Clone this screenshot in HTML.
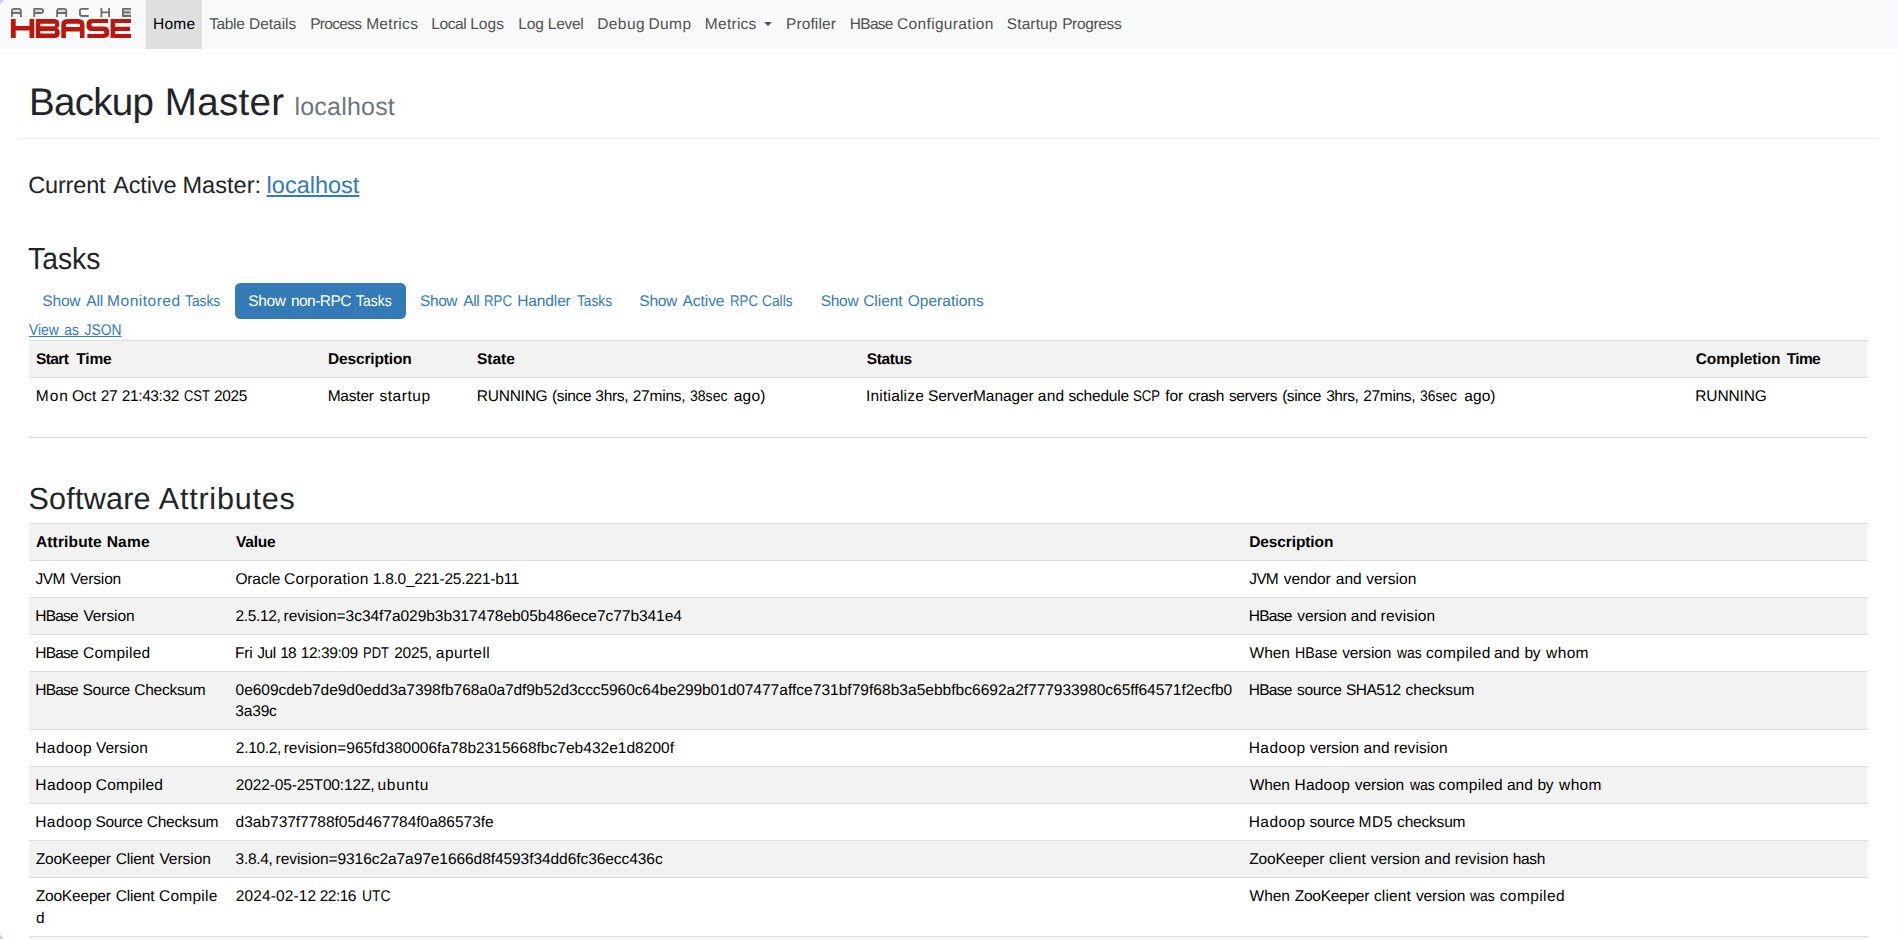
<!DOCTYPE html>
<html lang="en"><head><meta charset="utf-8"><title>Backup Master: localhost</title>
<style>
html,body{margin:0;padding:0}
body{width:1898px;height:939px;overflow:hidden;position:relative;background:#fff;font-family:"Liberation Sans",sans-serif;font-size:15px;color:#212529;text-rendering:geometricPrecision}
.t{position:absolute;white-space:nowrap;display:block}
a{color:#337ab7;text-decoration:none}
nav{position:absolute;left:0;top:0;width:1898px;height:49px;background:#f8f9fa}
nav ul{list-style:none;margin:0;padding:0}
nav li{position:absolute;top:0;height:49px}
nav li.active{background:#dfdfdf}
nav a{color:#505152}
nav li.active a{color:#000}
.caret{position:absolute;top:22px;width:0;height:0;border-left:4.2px solid transparent;border-right:4.2px solid transparent;border-top:4.2px solid #505152}
.corner{position:absolute;left:0;width:6px;height:6px;z-index:5}
.corner.tl{top:0;background:radial-gradient(circle at 6px 6px,rgba(188,210,240,0) 5.5px,#bcd2f0 6.3px)}
.corner.bl{bottom:0;background:radial-gradient(circle at 6px 0,rgba(181,201,232,0) 5.5px,#b5c9e8 6.3px)}
.edge{position:absolute;right:0;top:0;width:1px;height:939px;background:#fcfcfc;z-index:5}
main{position:absolute;left:0;top:0;width:1898px;height:939px;overflow:hidden}
h1,h2,h4{margin:0;font-weight:normal}
h1 small{color:#6c757d}
hr{position:absolute;left:18px;top:138px;width:1861px;height:1px;border:0;margin:0;background:#eeeeee}
.pills{list-style:none;margin:0;padding:0}
.pills li.active{position:absolute;left:235px;top:283px;width:171px;height:36px;border-radius:5.5px;background:#337ab7}
.pills li.active a{color:#fff}
table{margin-left:29px;width:1839px;border-collapse:collapse;table-layout:fixed}
td,th{color:#000;padding:0;border:0;border-top:1px solid #dddddd;font-weight:normal}
th .t, th.t{font-weight:bold}
tr.s>*{background:#f2f2f2}
.b{font-weight:bold}
.u{text-decoration:underline;text-decoration-thickness:1px;text-underline-offset:2px}
</style></head>
<body>
<nav>
<a class="brand" href="#"><svg width="140" height="49" viewBox="0 0 140 49" style="position:absolute;left:0;top:0">
<g fill="#dcdcdc"><rect x="12.8" y="9.7" width="7.2" height="2.4"/><rect x="35.1" y="9.7" width="7.1" height="2.4"/><rect x="58" y="9.7" width="7.3" height="2.4"/><rect x="123.8" y="9.7" width="7.2" height="5.4" fill="#d2d2d2"/></g>
<g fill="none" stroke="#6b6b6b" stroke-width="1.8" stroke-linejoin="round">
<path d="M11.9,16.9V10.8Q11.9,8.8 13.9,8.8H18.9Q20.9,8.8 20.9,10.8V16.9M11.9,13H20.9"/>
<path d="M34.2,16.9V8.8H41Q43.1,8.8 43.1,10.9Q43.1,13 41,13H34.2"/>
<path d="M57.1,16.9V10.8Q57.1,8.8 59.1,8.8H64.2Q66.2,8.8 66.2,10.8V16.9M57.1,13H66.2"/>
<path d="M88.7,8.8H82Q79.9,8.8 79.9,10.8V14Q79.9,16 82,16H88.7"/>
<path d="M101.4,7.9V16.9M109.1,7.9V16.9M101.4,12.4H109.1"/>
<path d="M131,8.8H122.9V16H131M122.9,12.4H130.5"/>
</g>
<g fill="#ba160c" fill-rule="evenodd">
<path d="M10.9,18.9H15.7V26.1H29.5V18.9H34.3V37.9H29.5V30.5H15.7V37.9H10.9Z"/>
<path d="M35.9,18.9H54Q59.2,18.9 59.2,23V25Q59.2,28 57,28.4Q59.6,28.8 59.6,32V34Q59.6,37.9 54.5,37.9H35.9ZM40.4,23.8V26.3H55V23.8ZM40.4,31.1V33.6H55V31.1Z"/>
<path d="M61.3,37.9V25Q61.3,18.9 67.5,18.9H78.3Q84.5,18.9 84.5,25V37.9H80V31.4H65.9V37.9ZM65.9,27H80V25.3Q80,23.8 78.5,23.8H67.4Q65.9,23.8 65.9,25.3Z"/>
<path d="M108.1,18.9H92Q86.6,18.9 86.6,23.5V26Q86.6,31 92,31H103Q104.4,31 104.4,32.4Q104.4,33.9 103,33.9H87.4V37.9H103.7Q109.1,37.9 109.1,33.5V31Q109.1,26.4 103.7,26.4H92.7Q91.4,26.4 91.4,24.7Q91.4,23 92.7,23H108.1Z"/>
<path d="M110.6,18.9H131V23H115V26.8H130V31H115V33.9H131V37.9H110.6Z"/>
</g>
</svg>
</a>
<ul>
<li class="active" style="left:146.0px;width:56.0px"><a href="#"><span id="n0" class="t" style="left:6.93px;top:14px;font-size:15.5px;line-height:21px;letter-spacing:0.298px;color:#000;">Home</span></a></li>
<li style="left:202.1px;width:100.9px"><a href="#"><span id="n1w0" class="t" style="left:7.06px;top:14px;font-size:15.5px;line-height:21px;letter-spacing:-0.354px;color:#505152;">Table</span> <span id="n1w1" class="t" style="left:47.03px;top:14px;font-size:15.5px;line-height:21px;letter-spacing:-0.037px;color:#505152;">Details</span></a></li>
<li style="left:304.0px;width:120.9px"><a href="#"><span id="n2w0" class="t" style="left:6.20px;top:14px;font-size:15.5px;line-height:21px;letter-spacing:-0.679px;color:#505152;">Process</span> <span id="n2w1" class="t" style="left:62.15px;top:14px;font-size:15.5px;line-height:21px;letter-spacing:0.300px;color:#505152;">Metrics</span></a></li>
<li style="left:425.1px;width:86.1px"><a href="#"><span id="n3w0" class="t" style="left:6.22px;top:14px;font-size:15.5px;line-height:21px;letter-spacing:-0.446px;color:#505152;">Local</span> <span id="n3w1" class="t" style="left:45.10px;top:14px;font-size:15.5px;line-height:21px;letter-spacing:0.044px;color:#505152;">Logs</span></a></li>
<li style="left:511.9px;width:78.7px"><a href="#"><span id="n4w0" class="t" style="left:6.30px;top:14px;font-size:15.5px;line-height:21px;letter-spacing:-0.092px;color:#505152;">Log</span> <span id="n4w1" class="t" style="left:35.97px;top:14px;font-size:15.5px;line-height:21px;letter-spacing:-0.298px;color:#505152;">Level</span></a></li>
<li style="left:590.8px;width:107.6px"><a href="#"><span id="n5w0" class="t" style="left:6.39px;top:14px;font-size:15.5px;line-height:21px;letter-spacing:0.436px;color:#505152;">Debug</span> <span id="n5w1" class="t" style="left:57.71px;top:14px;font-size:15.5px;line-height:21px;letter-spacing:0.399px;color:#505152;">Dump</span></a></li>
<li style="left:698.5px;width:81.2px"><a href="#"><span id="n6" class="t" style="left:6.36px;top:14px;font-size:15.5px;line-height:21px;letter-spacing:0.257px;color:#505152;">Metrics</span><i class="caret" style="left:65.5px"></i></a></li>
<li style="left:779.6px;width:63.7px"><a href="#"><span id="n7" class="t" style="left:6.34px;top:14px;font-size:15.5px;line-height:21px;letter-spacing:0.121px;color:#505152;">Profiler</span></a></li>
<li style="left:843.3px;width:156.4px"><a href="#"><span id="n8w0" class="t" style="left:6.57px;top:14px;font-size:15.5px;line-height:21px;letter-spacing:-0.741px;color:#505152;">HBase</span> <span id="n8w1" class="t" style="left:53.76px;top:14px;font-size:15.5px;line-height:21px;letter-spacing:0.335px;color:#505152;">Configuration</span></a></li>
<li style="left:1000.0px;width:128.6px"><a href="#"><span id="n9w0" class="t" style="left:6.76px;top:14px;font-size:15.5px;line-height:21px;letter-spacing:0.119px;color:#505152;">Startup</span> <span id="n9w1" class="t" style="left:62.13px;top:14px;font-size:15.5px;line-height:21px;letter-spacing:-0.340px;color:#505152;">Progress</span></a></li>
</ul>
</nav>
<main>
<h1><span id="h1a1" class="t" style="left:28.99px;top:79px;font-size:38.5px;line-height:47px;letter-spacing:-0.684px;">Backup</span> <span id="h1a2" class="t" style="left:164.84px;top:79px;font-size:38.5px;line-height:47px;letter-spacing:0.293px;">Master</span><small><span id="h1b" class="t" style="left:294.45px;top:91px;font-size:25px;line-height:32px;letter-spacing:0.212px;color:#6c757d;">localhost</span></small></h1>
<hr>
<h4><span id="h4a1" class="t" style="left:28.26px;top:170px;font-size:23.5px;line-height:30px;letter-spacing:-0.166px;">Current</span> <span id="h4a2" class="t" style="left:113.19px;top:170px;font-size:23.5px;line-height:30px;letter-spacing:-0.135px;">Active</span> <span id="h4a3" class="t" style="left:182.47px;top:170px;font-size:23.5px;line-height:30px;letter-spacing:0.053px;">Master:</span> <a href="#"><span id="h4b" class="t u" style="left:266.61px;top:170px;font-size:23.5px;line-height:30px;letter-spacing:0.001px;color:#337ab7;text-decoration-thickness:2px;text-underline-offset:1.5px;">localhost</span></a></h4>
<h2><span id="h2a" class="t" style="left:28.08px;top:240px;font-size:30.5px;line-height:38px;letter-spacing:0.000px;transform:scaleX(0.9289);transform-origin:0 0;">Tasks</span></h2>
<ul class="pills">
<li><a href="#"><span id="p0w0" class="t" style="left:42.34px;top:291px;font-size:15.5px;line-height:21px;letter-spacing:-0.181px;color:#337ab7;">Show</span> <span id="p0w1" class="t" style="left:86.28px;top:291px;font-size:15.5px;line-height:21px;letter-spacing:-0.147px;color:#337ab7;">All</span> <span id="p0w2" class="t" style="left:107.11px;top:291px;font-size:15.5px;line-height:21px;letter-spacing:0.505px;color:#337ab7;">Monitored</span> <span id="p0w3" class="t" style="left:184.81px;top:291px;font-size:15.5px;line-height:21px;letter-spacing:0.000px;color:#337ab7;transform:scaleX(0.8900);transform-origin:0 0;">Tasks</span></a></li>
<li class="active"><a href="#"><span id="p1w0" class="t" style="left:13.23px;top:8px;font-size:15.5px;line-height:21px;letter-spacing:-0.327px;color:#fff;">Show</span> <span id="p1w1" class="t" style="left:55.89px;top:8px;font-size:15.5px;line-height:21px;letter-spacing:-0.513px;color:#fff;">non-RPC</span> <span id="p1w2" class="t" style="left:121.31px;top:8px;font-size:15.5px;line-height:21px;letter-spacing:0.000px;color:#fff;transform:scaleX(0.9022);transform-origin:0 0;">Tasks</span></a></li>
<li><a href="#"><span id="p2w0" class="t" style="left:420.04px;top:291px;font-size:15.5px;line-height:21px;letter-spacing:-0.418px;color:#337ab7;">Show</span> <span id="p2w1" class="t" style="left:463.28px;top:291px;font-size:15.5px;line-height:21px;letter-spacing:-0.439px;color:#337ab7;">All</span> <span id="p2w2" class="t" style="left:484.15px;top:291px;font-size:15.5px;line-height:21px;letter-spacing:0.000px;color:#337ab7;transform:scaleX(0.8593);transform-origin:0 0;">RPC</span> <span id="p2w3" class="t" style="left:517.31px;top:291px;font-size:15.5px;line-height:21px;letter-spacing:-0.132px;color:#337ab7;">Handler</span> <span id="p2w4" class="t" style="left:577.35px;top:291px;font-size:15.5px;line-height:21px;letter-spacing:0.000px;color:#337ab7;transform:scaleX(0.8852);transform-origin:0 0;">Tasks</span></a></li>
<li><a href="#"><span id="p3w0" class="t" style="left:639.36px;top:291px;font-size:15.5px;line-height:21px;letter-spacing:-0.278px;color:#337ab7;">Show</span> <span id="p3w1" class="t" style="left:682.53px;top:291px;font-size:15.5px;line-height:21px;letter-spacing:-0.048px;color:#337ab7;">Active</span> <span id="p3w2" class="t" style="left:729.69px;top:291px;font-size:15.5px;line-height:21px;letter-spacing:0.000px;color:#337ab7;transform:scaleX(0.8539);transform-origin:0 0;">RPC</span> <span id="p3w3" class="t" style="left:761.74px;top:291px;font-size:15.5px;line-height:21px;letter-spacing:0.000px;color:#337ab7;transform:scaleX(0.8880);transform-origin:0 0;">Calls</span></a></li>
<li><a href="#"><span id="p4w0" class="t" style="left:820.84px;top:291px;font-size:15.5px;line-height:21px;letter-spacing:-0.340px;color:#337ab7;">Show</span> <span id="p4w1" class="t" style="left:863.22px;top:291px;font-size:15.5px;line-height:21px;letter-spacing:-0.056px;color:#337ab7;">Client</span> <span id="p4w2" class="t" style="left:907.66px;top:291px;font-size:15.5px;line-height:21px;letter-spacing:0.032px;color:#337ab7;">Operations</span></a></li>
</ul>
<a href="#"><span id="vj" class="t u" style="left:29.03px;top:320px;font-size:15.5px;line-height:21px;letter-spacing:0.000px;color:#337ab7;word-spacing:2px;text-underline-offset:1px;transform:scaleX(0.8928);transform-origin:0 0;">View as JSON</span></a>
<table style="margin-top:340px"><thead><tr class="s" style="height:37px">
<th><span id="t1h0w0" class="t b" style="left:35.88px;top:349px;font-size:15.5px;line-height:21px;letter-spacing:-0.551px;">Start</span> <span id="t1h0w1" class="t b" style="left:76.32px;top:349px;font-size:15.5px;line-height:21px;letter-spacing:-0.201px;">Time</span></th>
<th><span id="t1h1" class="t b" style="left:327.95px;top:349px;font-size:15.5px;line-height:21px;letter-spacing:-0.136px;">Description</span></th>
<th><span id="t1h2" class="t b" style="left:477.04px;top:349px;font-size:15.5px;line-height:21px;letter-spacing:-0.042px;">State</span></th>
<th><span id="t1h3" class="t b" style="left:866.68px;top:349px;font-size:15.5px;line-height:21px;letter-spacing:-0.364px;">Status</span></th>
<th><span id="t1h4w0" class="t b" style="left:1695.70px;top:349px;font-size:15.5px;line-height:21px;letter-spacing:-0.053px;">Completion</span> <span id="t1h4w1" class="t b" style="left:1786.81px;top:349px;font-size:15.5px;line-height:21px;letter-spacing:-0.669px;">Time</span></th>
</tr></thead><tbody><tr style="height:60px">
<td><span id="t1r0w0" class="t" style="left:35.76px;top:386px;font-size:15.5px;line-height:21px;letter-spacing:1.002px;">Mon</span> <span id="t1r0w1" class="t" style="left:72.03px;top:386px;font-size:15.5px;line-height:21px;letter-spacing:0.031px;">Oct</span> <span id="t1r0w2" class="t" style="left:100.87px;top:386px;font-size:15.5px;line-height:21px;letter-spacing:-0.377px;">27</span> <span id="t1r0w3" class="t" style="left:121.87px;top:386px;font-size:15.5px;line-height:21px;letter-spacing:-0.419px;">21:43:32</span> <span id="t1r0w4" class="t" style="left:183.60px;top:386px;font-size:15.5px;line-height:21px;letter-spacing:0.000px;transform:scaleX(0.8364);transform-origin:0 0;">CST</span> <span id="t1r0w5" class="t" style="left:214.01px;top:386px;font-size:15.5px;line-height:21px;letter-spacing:-0.330px;">2025</span></td>
<td><span id="t1r1w0" class="t" style="left:327.66px;top:386px;font-size:15.5px;line-height:21px;letter-spacing:-0.210px;">Master</span> <span id="t1r1w1" class="t" style="left:379.52px;top:386px;font-size:15.5px;line-height:21px;letter-spacing:0.519px;">startup</span></td>
<td><span id="t1r2w0" class="t" style="left:476.87px;top:386px;font-size:15.5px;line-height:21px;letter-spacing:-0.253px;">RUNNING</span> <span id="t1r2w1" class="t" style="left:551.99px;top:386px;font-size:15.5px;line-height:21px;letter-spacing:-0.358px;">(since</span> <span id="t1r2w2" class="t" style="left:595.34px;top:386px;font-size:15.5px;line-height:21px;letter-spacing:-0.290px;">3hrs,</span> <span id="t1r2w3" class="t" style="left:632.69px;top:386px;font-size:15.5px;line-height:21px;letter-spacing:-0.224px;">27mins,</span> <span id="t1r2w4" class="t" style="left:690.11px;top:386px;font-size:15.5px;line-height:21px;letter-spacing:0.000px;transform:scaleX(0.9056);transform-origin:0 0;">38sec</span> <span id="t1r2w5" class="t" style="left:733.72px;top:386px;font-size:15.5px;line-height:21px;letter-spacing:0.233px;">ago)</span></td>
<td><span id="t1r3w0" class="t" style="left:866.00px;top:386px;font-size:15.5px;line-height:21px;letter-spacing:0.204px;">Initialize</span> <span id="t1r3w1" class="t" style="left:927.88px;top:386px;font-size:15.5px;line-height:21px;letter-spacing:-0.084px;">ServerManager</span> <span id="t1r3w2" class="t" style="left:1037.78px;top:386px;font-size:15.5px;line-height:21px;letter-spacing:0.263px;">and</span> <span id="t1r3w3" class="t" style="left:1068.44px;top:386px;font-size:15.5px;line-height:21px;letter-spacing:-0.186px;">schedule</span> <span id="t1r3w4" class="t" style="left:1133.13px;top:386px;font-size:15.5px;line-height:21px;letter-spacing:0.000px;transform:scaleX(0.8513);transform-origin:0 0;">SCP</span> <span id="t1r3w5" class="t" style="left:1165.19px;top:386px;font-size:15.5px;line-height:21px;letter-spacing:-0.065px;">for</span> <span id="t1r3w6" class="t" style="left:1188.13px;top:386px;font-size:15.5px;line-height:21px;letter-spacing:-0.442px;">crash</span> <span id="t1r3w7" class="t" style="left:1228.98px;top:386px;font-size:15.5px;line-height:21px;letter-spacing:-0.398px;">servers</span> <span id="t1r3w8" class="t" style="left:1282.16px;top:386px;font-size:15.5px;line-height:21px;letter-spacing:-0.448px;">(since</span> <span id="t1r3w9" class="t" style="left:1326.20px;top:386px;font-size:15.5px;line-height:21px;letter-spacing:-0.487px;">3hrs,</span> <span id="t1r3w10" class="t" style="left:1363.21px;top:386px;font-size:15.5px;line-height:21px;letter-spacing:-0.321px;">27mins,</span> <span id="t1r3w11" class="t" style="left:1420.27px;top:386px;font-size:15.5px;line-height:21px;letter-spacing:0.000px;transform:scaleX(0.8932);transform-origin:0 0;">36sec</span> <span id="t1r3w12" class="t" style="left:1464.24px;top:386px;font-size:15.5px;line-height:21px;letter-spacing:0.082px;">ago)</span></td>
<td><span id="t1r4" class="t" style="left:1695.31px;top:386px;font-size:15.5px;line-height:21px;letter-spacing:-0.149px;">RUNNING</span></td>
</tr><tr style="height:1px"><td colspan="5"></td></tr></tbody></table>
<h2><span id="h2b1" class="t" style="left:28.55px;top:480px;font-size:30.5px;line-height:38px;letter-spacing:0.226px;">Software</span> <span id="h2b2" class="t" style="left:158.79px;top:480px;font-size:30.5px;line-height:38px;letter-spacing:0.780px;">Attributes</span></h2>
<table style="margin-top:84px"><thead><tr class="s" style="height:37px">
<th><span id="t2h0w0" class="t b" style="left:35.92px;top:532px;font-size:15.5px;line-height:21px;letter-spacing:0.151px;">Attribute</span> <span id="t2h0w1" class="t b" style="left:106.67px;top:532px;font-size:15.5px;line-height:21px;letter-spacing:0.219px;">Name</span></th>
<th><span id="t2h1" class="t b" style="left:236.01px;top:532px;font-size:15.5px;line-height:21px;letter-spacing:-0.237px;">Value</span></th>
<th><span id="t2h2" class="t b" style="left:1249.14px;top:532px;font-size:15.5px;line-height:21px;letter-spacing:-0.100px;">Description</span></th>
</tr></thead><tbody>
<tr style="height:37px">
<td><span id="t2r0nw0" class="t" style="left:35.58px;top:569px;font-size:15.5px;line-height:21px;letter-spacing:-0.643px;">JVM</span> <span id="t2r0nw1" class="t" style="left:70.57px;top:569px;font-size:15.5px;line-height:21px;letter-spacing:-0.177px;">Version</span>
</td><td>
<span id="t2r0v0w0" class="t" style="left:235.40px;top:569px;font-size:15.5px;line-height:21px;letter-spacing:-0.118px;">Oracle</span> <span id="t2r0v0w1" class="t" style="left:284.05px;top:569px;font-size:15.5px;line-height:21px;letter-spacing:0.335px;">Corporation</span> <span id="t2r0v0w2" class="t" style="left:372.76px;top:569px;font-size:15.5px;line-height:21px;letter-spacing:-0.246px;">1.8.0_221-25.221-b11</span>
</td><td><span id="t2r0dw0" class="t" style="left:1249.26px;top:569px;font-size:15.5px;line-height:21px;letter-spacing:-0.794px;">JVM</span> <span id="t2r0dw1" class="t" style="left:1283.72px;top:569px;font-size:15.5px;line-height:21px;letter-spacing:-0.070px;">vendor</span> <span id="t2r0dw2" class="t" style="left:1335.73px;top:569px;font-size:15.5px;line-height:21px;letter-spacing:0.067px;">and</span> <span id="t2r0dw3" class="t" style="left:1366.20px;top:569px;font-size:15.5px;line-height:21px;letter-spacing:0.030px;">version</span></td></tr>
<tr class="s" style="height:37px">
<td><span id="t2r1nw0" class="t" style="left:35.30px;top:606px;font-size:15.5px;line-height:21px;letter-spacing:-0.794px;">HBase</span> <span id="t2r1nw1" class="t" style="left:83.38px;top:606px;font-size:15.5px;line-height:21px;letter-spacing:-0.078px;">Version</span>
</td><td>
<span id="t2r1v0w0" class="t" style="left:235.55px;top:606px;font-size:15.5px;line-height:21px;letter-spacing:-0.374px;">2.5.12,</span> <span id="t2r1v0w1" class="t" style="left:283.53px;top:606px;font-size:15.5px;line-height:21px;letter-spacing:-0.041px;">revision=3c34f7a029b3b317478eb05b486ece7c77b341e4</span>
</td><td><span id="t2r1dw0" class="t" style="left:1248.76px;top:606px;font-size:15.5px;line-height:21px;letter-spacing:-0.744px;">HBase</span> <span id="t2r1dw1" class="t" style="left:1297.30px;top:606px;font-size:15.5px;line-height:21px;letter-spacing:-0.099px;">version</span> <span id="t2r1dw2" class="t" style="left:1350.76px;top:606px;font-size:15.5px;line-height:21px;letter-spacing:0.044px;">and</span> <span id="t2r1dw3" class="t" style="left:1380.60px;top:606px;font-size:15.5px;line-height:21px;letter-spacing:0.177px;">revision</span></td></tr>
<tr style="height:37px">
<td><span id="t2r2nw0" class="t" style="left:35.30px;top:643px;font-size:15.5px;line-height:21px;letter-spacing:-0.792px;">HBase</span> <span id="t2r2nw1" class="t" style="left:82.94px;top:643px;font-size:15.5px;line-height:21px;letter-spacing:0.251px;">Compiled</span>
</td><td>
<span id="t2r2v0w0" class="t" style="left:235.07px;top:643px;font-size:15.5px;line-height:21px;letter-spacing:-0.206px;">Fri</span> <span id="t2r2v0w1" class="t" style="left:257.29px;top:643px;font-size:15.5px;line-height:21px;letter-spacing:-0.433px;">Jul</span> <span id="t2r2v0w2" class="t" style="left:280.16px;top:643px;font-size:15.5px;line-height:21px;letter-spacing:-0.888px;">18</span> <span id="t2r2v0w3" class="t" style="left:300.71px;top:643px;font-size:15.5px;line-height:21px;letter-spacing:-0.412px;">12:39:09</span> <span id="t2r2v0w4" class="t" style="left:362.75px;top:643px;font-size:15.5px;line-height:21px;letter-spacing:0.000px;transform:scaleX(0.8351);transform-origin:0 0;">PDT</span> <span id="t2r2v0w5" class="t" style="left:394.20px;top:643px;font-size:15.5px;line-height:21px;letter-spacing:-0.201px;">2025,</span> <span id="t2r2v0w6" class="t" style="left:435.87px;top:643px;font-size:15.5px;line-height:21px;letter-spacing:0.433px;">apurtell</span>
</td><td><span id="t2r2dw0" class="t" style="left:1249.62px;top:643px;font-size:15.5px;line-height:21px;letter-spacing:-0.040px;">When</span> <span id="t2r2dw1" class="t" style="left:1294.98px;top:643px;font-size:15.5px;line-height:21px;letter-spacing:0.000px;transform:scaleX(0.9120);transform-origin:0 0;">HBase</span> <span id="t2r2dw2" class="t" style="left:1342.27px;top:643px;font-size:15.5px;line-height:21px;letter-spacing:-0.149px;">version</span> <span id="t2r2dw3" class="t" style="left:1397.33px;top:643px;font-size:15.5px;line-height:21px;letter-spacing:0.000px;transform:scaleX(0.8974);transform-origin:0 0;">was</span> <span id="t2r2dw4" class="t" style="left:1425.89px;top:643px;font-size:15.5px;line-height:21px;letter-spacing:0.347px;">compiled</span> <span id="t2r2dw5" class="t" style="left:1493.99px;top:643px;font-size:15.5px;line-height:21px;letter-spacing:-0.128px;">and</span> <span id="t2r2dw6" class="t" style="left:1524.48px;top:643px;font-size:15.5px;line-height:21px;letter-spacing:-0.319px;">by</span> <span id="t2r2dw7" class="t" style="left:1546.08px;top:643px;font-size:15.5px;line-height:21px;letter-spacing:0.369px;">whom</span></td></tr>
<tr class="s" style="height:58px">
<td><span id="t2r3nw0" class="t" style="left:35.30px;top:680px;font-size:15.5px;line-height:21px;letter-spacing:-0.794px;">HBase</span> <span id="t2r3nw1" class="t" style="left:82.52px;top:680px;font-size:15.5px;line-height:21px;letter-spacing:-0.282px;">Source</span> <span id="t2r3nw2" class="t" style="left:134.37px;top:680px;font-size:15.5px;line-height:21px;letter-spacing:-0.282px;">Checksum</span>
</td><td>
<span id="t2r3v0w0" class="t" style="left:235.60px;top:680px;font-size:15.5px;line-height:21px;letter-spacing:-0.038px;">0e609cdeb7de9d0edd3a7398fb768a0</span><span id="t2r3v0w1" class="t" style="left:496.50px;top:680px;font-size:15.5px;line-height:21px;letter-spacing:-0.085px;">a7df9b52d3ccc5960c64be299b01d07</span><span id="t2r3v0w2" class="t" style="left:753.30px;top:680px;font-size:15.5px;line-height:21px;letter-spacing:0.034px;">477affce731bf79f68b3a5ebbfbc669</span><span id="t2r3v0w3" class="t" style="left:998.00px;top:680px;font-size:15.5px;line-height:21px;letter-spacing:-0.031px;">2a2f777933980c65ff64571f2ecfb0</span>
<span id="t2r3v1" class="t" style="left:235.33px;top:701px;font-size:15.5px;line-height:21px;letter-spacing:-0.175px;">3a39c</span>
</td><td><span id="t2r3dw0" class="t" style="left:1248.76px;top:680px;font-size:15.5px;line-height:21px;letter-spacing:-0.744px;">HBase</span> <span id="t2r3dw1" class="t" style="left:1297.02px;top:680px;font-size:15.5px;line-height:21px;letter-spacing:-0.335px;">source</span> <span id="t2r3dw2" class="t" style="left:1346.01px;top:680px;font-size:15.5px;line-height:21px;letter-spacing:-0.526px;">SHA512</span> <span id="t2r3dw3" class="t" style="left:1405.58px;top:680px;font-size:15.5px;line-height:21px;letter-spacing:-0.144px;">checksum</span></td></tr>
<tr style="height:37px">
<td><span id="t2r4nw0" class="t" style="left:35.25px;top:738px;font-size:15.5px;line-height:21px;letter-spacing:0.425px;">Hadoop</span> <span id="t2r4nw1" class="t" style="left:95.99px;top:738px;font-size:15.5px;line-height:21px;letter-spacing:0.016px;">Version</span>
</td><td>
<span id="t2r4v0w0" class="t" style="left:235.84px;top:738px;font-size:15.5px;line-height:21px;letter-spacing:-0.303px;">2.10.2,</span> <span id="t2r4v0w1" class="t" style="left:283.65px;top:738px;font-size:15.5px;line-height:21px;letter-spacing:0.025px;">revision=965fd380006fa78b2315668fbc7eb432e1d8200f</span>
</td><td><span id="t2r4dw0" class="t" style="left:1248.75px;top:738px;font-size:15.5px;line-height:21px;letter-spacing:0.429px;">Hadoop</span> <span id="t2r4dw1" class="t" style="left:1309.84px;top:738px;font-size:15.5px;line-height:21px;letter-spacing:-0.103px;">version</span> <span id="t2r4dw2" class="t" style="left:1363.41px;top:738px;font-size:15.5px;line-height:21px;letter-spacing:0.188px;">and</span> <span id="t2r4dw3" class="t" style="left:1393.63px;top:738px;font-size:15.5px;line-height:21px;letter-spacing:0.089px;">revision</span></td></tr>
<tr class="s" style="height:37px">
<td><span id="t2r5nw0" class="t" style="left:35.30px;top:775px;font-size:15.5px;line-height:21px;letter-spacing:0.415px;">Hadoop</span> <span id="t2r5nw1" class="t" style="left:95.81px;top:775px;font-size:15.5px;line-height:21px;letter-spacing:0.225px;">Compiled</span>
</td><td>
<span id="t2r5v0w0" class="t" style="left:235.86px;top:775px;font-size:15.5px;line-height:21px;letter-spacing:-0.155px;">2022-05-25T00:12Z,</span> <span id="t2r5v0w1" class="t" style="left:377.52px;top:775px;font-size:15.5px;line-height:21px;letter-spacing:0.702px;">ubuntu</span>
</td><td><span id="t2r5dw0" class="t" style="left:1249.67px;top:775px;font-size:15.5px;line-height:21px;letter-spacing:-0.073px;">When</span> <span id="t2r5dw1" class="t" style="left:1294.48px;top:775px;font-size:15.5px;line-height:21px;letter-spacing:0.217px;">Hadoop</span> <span id="t2r5dw2" class="t" style="left:1354.83px;top:775px;font-size:15.5px;line-height:21px;letter-spacing:-0.101px;">version</span> <span id="t2r5dw3" class="t" style="left:1410.15px;top:775px;font-size:15.5px;line-height:21px;letter-spacing:0.000px;transform:scaleX(0.9005);transform-origin:0 0;">was</span> <span id="t2r5dw4" class="t" style="left:1438.58px;top:775px;font-size:15.5px;line-height:21px;letter-spacing:0.305px;">compiled</span> <span id="t2r5dw5" class="t" style="left:1506.94px;top:775px;font-size:15.5px;line-height:21px;letter-spacing:0.063px;">and</span> <span id="t2r5dw6" class="t" style="left:1537.50px;top:775px;font-size:15.5px;line-height:21px;letter-spacing:-0.313px;">by</span> <span id="t2r5dw7" class="t" style="left:1559.09px;top:775px;font-size:15.5px;line-height:21px;letter-spacing:0.355px;">whom</span></td></tr>
<tr style="height:37px">
<td><span id="t2r6nw0" class="t" style="left:35.25px;top:812px;font-size:15.5px;line-height:21px;letter-spacing:0.425px;">Hadoop</span> <span id="t2r6nw1" class="t" style="left:95.49px;top:812px;font-size:15.5px;line-height:21px;letter-spacing:-0.348px;">Source</span> <span id="t2r6nw2" class="t" style="left:146.70px;top:812px;font-size:15.5px;line-height:21px;letter-spacing:-0.200px;">Checksum</span>
</td><td>
<span id="t2r6v0" class="t" style="left:235.61px;top:812px;font-size:15.5px;line-height:21px;letter-spacing:-0.017px;">d3ab737f7788f05d467784f0a86573fe</span>
</td><td><span id="t2r6dw0" class="t" style="left:1248.75px;top:812px;font-size:15.5px;line-height:21px;letter-spacing:0.429px;">Hadoop</span> <span id="t2r6dw1" class="t" style="left:1309.58px;top:812px;font-size:15.5px;line-height:21px;letter-spacing:-0.245px;">source</span> <span id="t2r6dw2" class="t" style="left:1358.46px;top:812px;font-size:15.5px;line-height:21px;letter-spacing:0.657px;">MD5</span> <span id="t2r6dw3" class="t" style="left:1397.12px;top:812px;font-size:15.5px;line-height:21px;letter-spacing:-0.204px;">checksum</span></td></tr>
<tr class="s" style="height:37px">
<td><span id="t2r7nw0" class="t" style="left:35.72px;top:849px;font-size:15.5px;line-height:21px;letter-spacing:-0.187px;">ZooKeeper</span> <span id="t2r7nw1" class="t" style="left:115.67px;top:849px;font-size:15.5px;line-height:21px;letter-spacing:-0.175px;">Client</span> <span id="t2r7nw2" class="t" style="left:159.42px;top:849px;font-size:15.5px;line-height:21px;letter-spacing:-0.024px;">Version</span>
</td><td>
<span id="t2r7v0w0" class="t" style="left:235.58px;top:849px;font-size:15.5px;line-height:21px;letter-spacing:-0.289px;">3.8.4,</span> <span id="t2r7v0w1" class="t" style="left:275.59px;top:849px;font-size:15.5px;line-height:21px;letter-spacing:-0.061px;">revision=9316c2a7a97e1666d8f4593f34dd6fc36ecc436c</span>
</td><td><span id="t2r7dw0" class="t" style="left:1249.27px;top:849px;font-size:15.5px;line-height:21px;letter-spacing:-0.192px;">ZooKeeper</span> <span id="t2r7dw1" class="t" style="left:1328.91px;top:849px;font-size:15.5px;line-height:21px;letter-spacing:0.129px;">client</span> <span id="t2r7dw2" class="t" style="left:1370.83px;top:849px;font-size:15.5px;line-height:21px;letter-spacing:-0.101px;">version</span> <span id="t2r7dw3" class="t" style="left:1424.60px;top:849px;font-size:15.5px;line-height:21px;letter-spacing:0.068px;">and</span> <span id="t2r7dw4" class="t" style="left:1454.66px;top:849px;font-size:15.5px;line-height:21px;letter-spacing:0.088px;">revision</span> <span id="t2r7dw5" class="t" style="left:1512.70px;top:849px;font-size:15.5px;line-height:21px;letter-spacing:-0.335px;">hash</span></td></tr>
<tr style="height:59px">
<td><span id="t2r8nw0" class="t" style="left:35.73px;top:886px;font-size:15.5px;line-height:21px;letter-spacing:-0.186px;">ZooKeeper</span> <span id="t2r8nw1" class="t" style="left:115.69px;top:886px;font-size:15.5px;line-height:21px;letter-spacing:-0.174px;">Client</span> <span id="t2r8nw2" class="t" style="left:159.05px;top:886px;font-size:15.5px;line-height:21px;letter-spacing:0.226px;">Compile</span>
<span id="t2r8n2" class="t" style="left:35.89px;top:908px;font-size:15.5px;line-height:21px;letter-spacing:0.000px;">d</span>
</td><td>
<span id="t2r8v0w0" class="t" style="left:235.84px;top:886px;font-size:15.5px;line-height:21px;letter-spacing:0.099px;">2024-02-12</span> <span id="t2r8v0w1" class="t" style="left:319.79px;top:886px;font-size:15.5px;line-height:21px;letter-spacing:-0.533px;">22:16</span> <span id="t2r8v0w2" class="t" style="left:361.68px;top:886px;font-size:15.5px;line-height:21px;letter-spacing:0.000px;transform:scaleX(0.8960);transform-origin:0 0;">UTC</span>
</td><td><span id="t2r8dw0" class="t" style="left:1249.62px;top:886px;font-size:15.5px;line-height:21px;letter-spacing:-0.040px;">When</span> <span id="t2r8dw1" class="t" style="left:1294.73px;top:886px;font-size:15.5px;line-height:21px;letter-spacing:-0.264px;">ZooKeeper</span> <span id="t2r8dw2" class="t" style="left:1373.95px;top:886px;font-size:15.5px;line-height:21px;letter-spacing:0.129px;">client</span> <span id="t2r8dw3" class="t" style="left:1415.95px;top:886px;font-size:15.5px;line-height:21px;letter-spacing:-0.106px;">version</span> <span id="t2r8dw4" class="t" style="left:1470.13px;top:886px;font-size:15.5px;line-height:21px;letter-spacing:0.000px;transform:scaleX(0.8982);transform-origin:0 0;">was</span> <span id="t2r8dw5" class="t" style="left:1499.73px;top:886px;font-size:15.5px;line-height:21px;letter-spacing:0.406px;">compiled</span></td></tr>
<tr class="s" style="height:10px"><td></td><td></td><td></td></tr>
</tbody></table>
</main>
<i class="corner tl"></i><i class="corner bl"></i><i class="edge"></i>
</body></html>
